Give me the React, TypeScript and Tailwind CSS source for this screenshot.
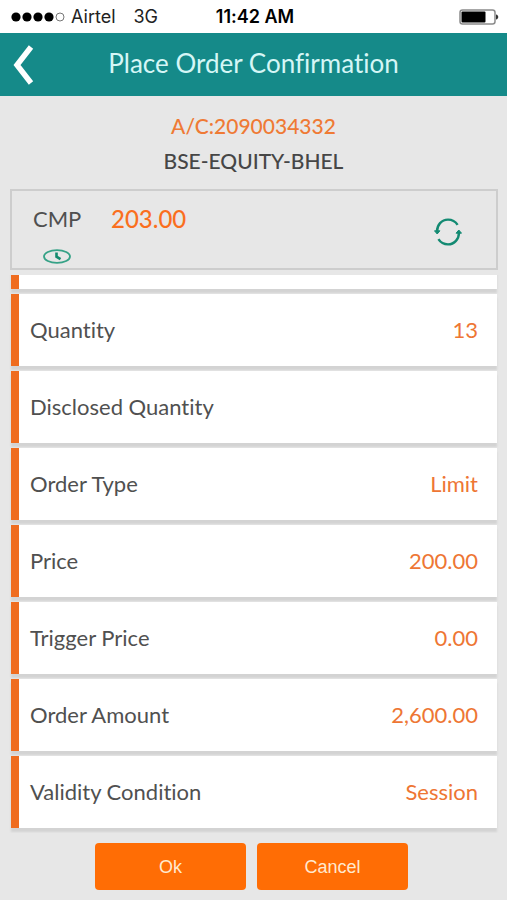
import React from 'react';

interface OrderField {
  label: string;
  value: string;
}

const orderFields: OrderField[] = [
  { label: 'Quantity', value: '13' },
  { label: 'Disclosed Quantity', value: '' },
  { label: 'Order Type', value: 'Limit' },
  { label: 'Price', value: '200.00' },
  { label: 'Trigger Price', value: '0.00' },
  { label: 'Order Amount', value: '2,600.00' },
  { label: 'Validity Condition', value: 'Session' },
];

const StatusBar: React.FC = () => (
  <div className="grid h-[33px] shrink-0 grid-cols-[1fr_auto_1fr] items-center bg-white pl-[11px] pr-2 pt-px font-['Inter','Liberation_Sans',sans-serif] text-lg text-[#222]">
    <div className="flex items-center">
      <svg viewBox="0 0 54 10" className="h-[10px] w-[54px]" aria-hidden="true">
        <circle cx="5" cy="5" r="4.6" fill="#000" />
        <circle cx="16" cy="5" r="4.6" fill="#000" />
        <circle cx="27" cy="5" r="4.6" fill="#000" />
        <circle cx="38" cy="5" r="4.6" fill="#000" />
        <circle cx="49" cy="5" r="4" fill="none" stroke="#777" />
      </svg>
      <span className="ml-[6px]">Airtel</span>
      <span className="ml-[18px]">3G</span>
    </div>
    <span className="font-semibold text-black">11:42 AM</span>
    <svg viewBox="0 0 40 16" className="h-4 w-10 justify-self-end" aria-hidden="true">
      <rect x="1" y="1" width="35" height="14" rx="2.5" fill="#fff" stroke="#8b8b8b" strokeWidth="1.5" />
      <rect x="2.5" y="2.5" width="24" height="11" rx="1" fill="#000" />
      <path d="M37 5.5c3 .5 3 4.500 0 5z" fill="#333" />
    </svg>
  </div>
);

const ClockIcon: React.FC = () => (
  <svg viewBox="0 0 28 15" className="h-[15px] w-7" fill="none" aria-hidden="true">
    <ellipse cx="14" cy="7.5" rx="13" ry="6.4" stroke="#36a287" strokeWidth="1.8" />
    <path d="M13.500 3.500v4.200l4 2.500" stroke="#158a6e" strokeWidth="2.6" />
  </svg>
);

const RefreshIcon: React.FC = () => (
  <svg viewBox="0 0 28 28" className="h-7 w-7" fill="none" aria-hidden="true">
    <path d="M3 13.500C3 7 7.500 1.600 14 1.600c4 0 7.500 2 9.600 5.200" stroke="#138a72" strokeWidth="2.4" />
    <path d="M25 14.500c0 6.500-4.500 11.900-11 11.900-4 0-7.500-2-9.600-5.200" stroke="#138a72" strokeWidth="2.4" />
    <path d="M.5 12.800h5.400L3.200 16z" fill="#138a72" stroke="#138a72" strokeLinejoin="round" />
    <path d="M27.500 15.200h-5.400L24.800 12z" fill="#138a72" stroke="#138a72" strokeLinejoin="round" />
  </svg>
);

const OrderRow: React.FC<OrderField> = ({ label, value }) => (
  <div className="flex h-[72px] shrink-0 items-center justify-between border-l-8 border-[#ef6c1f] bg-white pl-[11px] pr-[19px] pb-[2px] text-[22px] shadow-[0_4px_2px_#d3d3d3]">
    <dt className="text-[#505050]">{label}</dt>
    <dd className="text-[#ee7634]">{value}</dd>
  </div>
);

const App: React.FC = () => {
  return (
    <div className="flex h-screen flex-col bg-[#e7e7e7] font-['Lato','Liberation_Sans',sans-serif] [font-variant-ligatures:none]">
      <StatusBar />

      <header className="grid h-[63px] shrink-0 grid-cols-[44px_1fr_44px] items-center bg-[#158a89]">
        <button type="button" aria-label="Back" className="pl-[13px]">
          <svg viewBox="0 0 22 40" className="h-10 w-[22px]" fill="none" aria-hidden="true">
            <path d="M18 2L4 20l14 18" stroke="#fff" strokeWidth="5.5" />
          </svg>
        </button>
        <h1 className="pb-[2px] text-center text-[26px] text-[#d5f6f6]">Place Order Confirmation</h1>
      </header>

      <div className="flex shrink-0 flex-col items-center pt-[18px] text-[21px] font-medium leading-6">
        <p className="text-[#ef7a35]">A/C:2090034332</p>
        <p className="mt-[11px] text-[#464646]">BSE-EQUITY-BHEL</p>
      </div>

      <section className="ml-[10px] mr-[9px] mt-4 flex h-[81px] shrink-0 items-center justify-between border-2 border-[#cdcdcd] pl-[21px] pr-[34px]">
        <div className="pt-2">
          <div className="flex items-center leading-7">
            <span className="w-[78px] text-[22px] text-[#505050]">CMP</span>
            <span className="text-2xl font-medium text-[#fa6f1e]">203.00</span>
          </div>
          <button type="button" aria-label="Price time" className="ml-[10px] mt-[14px] block">
            <ClockIcon />
          </button>
        </div>
        <button type="button" aria-label="Refresh price" className="pt-1">
          <RefreshIcon />
        </button>
      </section>

      {/* scrolled to the last field, so the row above Quantity is cut off */}
      <dl className="mt-[5px] flex min-h-0 flex-1 flex-col justify-end gap-[5px] overflow-hidden pb-[5px] pl-[11px] pr-[10px]">
        <OrderRow label="" value="" />
        {orderFields.map(field => (
          <OrderRow key={field.label} label={field.label} value={field.value} />
        ))}
      </dl>

      <footer className="flex shrink-0 justify-center gap-[11px] pb-[10px] pr-1 pt-[10px] font-['Liberation_Sans',sans-serif] text-lg text-[#ffe9cf]">
        <button type="button" className="h-[47px] w-[30%] rounded bg-[#ff6d05]">Ok</button>
        <button type="button" className="h-[47px] w-[30%] rounded bg-[#ff6d05]">Cancel</button>
      </footer>
    </div>
  );
};

export default App;
